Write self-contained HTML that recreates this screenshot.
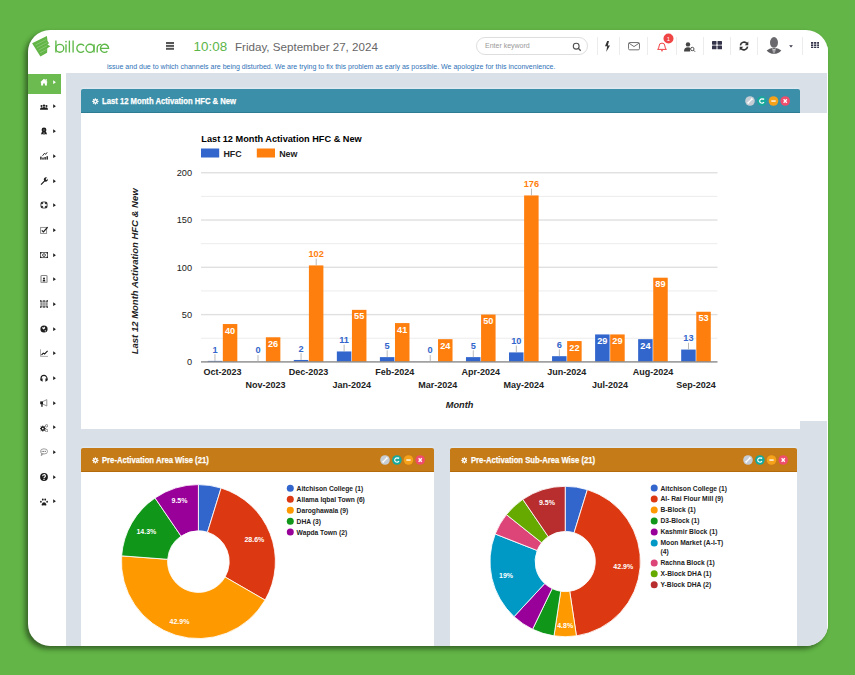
<!DOCTYPE html>
<html><head><meta charset="utf-8">
<style>
*{box-sizing:border-box;margin:0;padding:0}
html,body{width:855px;height:675px;overflow:hidden;background:#62b546;font-family:"Liberation Sans",sans-serif;position:relative}
.abs{position:absolute}
#card{position:absolute;left:28px;top:30px;width:800px;height:616px;background:#fff;border-radius:22px;box-shadow:-3px 3px 5px rgba(0,0,0,0.45);overflow:hidden}
#content{position:absolute;left:38px;top:43px;width:761px;height:573px;background:#d9e0e8}
.ph{position:absolute;height:24.2px;color:#fff;border-radius:2px 2px 0 0;box-shadow:0 -1.5px 0 #dfe7f0}
.pt{position:absolute;left:20.8px;top:6.9px;font-size:8.9px;font-weight:bold;white-space:nowrap;transform:scaleX(0.865);transform-origin:0 0;-webkit-text-stroke:0.25px #fff}
.gear{position:absolute;left:10.7px;top:9.1px}
.hdiv{position:absolute;top:37px;width:1px;height:18px;background:#ececec}
svg text{font-family:"Liberation Sans",sans-serif}
</style></head><body>
<div id="card">
  <div id="content"></div>
  <div class="abs" style="left:0;top:43.5px;width:32.8px;height:20.7px;background:#6cbb51"></div>
  <div class="abs" style="left:799px;top:0;width:1px;height:616px;background:#fff"></div>
</div>

<!-- logo -->
<svg class="abs" style="left:0;top:0" width="120" height="70" viewBox="0 0 120 70">
  <path d="M32.1 43.2 L46.9 35.9 L47.5 40.7 L49 43.3 L47.4 44.4 L50.4 46.3 L47.3 48.2 L47.1 52.7 L40.4 56.5Z" fill="#62b546"/>
  <path d="M35.5 45 L46 39.6 M37 47.6 L47.3 42.3 M38.5 50.2 L47 45.8 M40 52.8 L46.5 49.4" stroke="#a8d898" stroke-width="0.5"/>
  <g fill="none" stroke="#5eb848" stroke-width="1.35">
    <path d="M55.9 40.6 V52.5"/><circle cx="59.8" cy="48.3" r="3.95"/>
    <path d="M66 44.2 V52.5"/><path d="M69.4 40.6 V52.5"/><path d="M73.1 40.6 V52.5"/>
    <path d="M84 45.7 A4.05 4.05 0 1 0 84 50.9"/>
    <circle cx="90" cy="48.3" r="4.05"/><path d="M94.05 44.2 V52.5"/>
    <path d="M97.2 52.5 V48.3 Q97.2 44.3 101.2 44.3"/>
    <path d="M100.5 48.3 H108.6 A4.05 4.05 0 1 0 107.4 51.2"/>
  </g>
  <circle cx="66" cy="41.6" r="0.85" fill="#5eb848"/>
</svg>
<!-- hamburger -->
<div class="abs" style="left:166px;top:42.3px;width:8px;height:1.3px;background:#555;box-shadow:0 2.9px 0 #555,0 5.8px 0 #555"></div>
<div class="abs" style="left:193.6px;top:38.5px;font-size:13.4px;color:#5cb547;white-space:nowrap">10:08</div>
<div class="abs" style="left:235px;top:40px;font-size:11.6px;color:#666;white-space:nowrap">Friday, September 27, 2024</div>
<div class="abs" style="left:107px;top:62.9px;font-size:7.04px;color:#2f72b8;white-space:nowrap">issue and due to which channels are being disturbed. We are trying to fix this problem as early as possible. We apologize for this inconvenience.</div>

<!-- search -->
<div class="abs" style="left:476.4px;top:37.4px;width:111.3px;height:17.5px;border:1px solid #dedede;border-radius:9px"></div>
<div class="abs" style="left:485px;top:41.5px;font-size:7px;color:#999;white-space:nowrap">Enter keyword</div>
<svg class="abs" style="left:572px;top:41.5px" width="10" height="10" viewBox="0 0 10 10"><circle cx="4.2" cy="4.2" r="2.9" fill="none" stroke="#505050" stroke-width="1.1"/><path d="M6.3 6.3 L8.7 8.7" stroke="#505050" stroke-width="1.3"/></svg>

<div class="hdiv" style="left:596.5px"></div>
<div class="hdiv" style="left:619px"></div>
<div class="hdiv" style="left:647px"></div>
<div class="hdiv" style="left:675.5px"></div>
<div class="hdiv" style="left:703px"></div>
<div class="hdiv" style="left:730px"></div>
<div class="hdiv" style="left:757px"></div>
<div class="hdiv" style="left:801.5px"></div>

<!-- header icons -->
<svg class="abs" style="left:604px;top:40.5px" width="7" height="11" viewBox="0 0 7 11"><path d="M3.2 0 L1 5.2 L3.2 5.2 L2.2 11 L6 4.6 L3.8 4.6 L5 0Z" fill="#333"/></svg>
<svg class="abs" style="left:627.6px;top:42.2px" width="12" height="8.4" viewBox="0 0 12 8.4"><rect x="0.55" y="0.55" width="10.9" height="7.3" rx="1.2" fill="none" stroke="#707070" stroke-width="1"/><path d="M0.9 1.1 L6 4.6 L11.1 1.1" fill="none" stroke="#707070" stroke-width="1"/></svg>
<svg class="abs" style="left:655.5px;top:40.5px" width="12" height="11" viewBox="0 0 12 11"><path d="M1.6 8.4 Q3 7.4 3.1 5 A2.9 2.9 0 0 1 8.9 5 Q9 7.4 10.4 8.4Z" fill="none" stroke="#f0383b" stroke-width="0.95" stroke-linejoin="round"/><path d="M5 9.5 Q6 10.6 7 9.5" fill="none" stroke="#f0383b" stroke-width="0.95"/></svg>
<svg class="abs" style="left:663.3px;top:33.3px" width="11" height="11" viewBox="0 0 11 11"><circle cx="5.5" cy="5.5" r="5" fill="#f04545"/><text x="5.5" y="7.7" text-anchor="middle" font-size="6" fill="#fff">1</text></svg>
<svg class="abs" style="left:684px;top:41.5px" width="12" height="10" viewBox="0 0 12 10"><circle cx="4" cy="2.4" r="2.2" fill="#444"/><path d="M0 9.5 Q0 5.3 4 5.3 Q6 5.3 6.5 6.2 Q5.5 7.5 6.3 9.5Z" fill="#444"/><circle cx="8.3" cy="7" r="1.7" fill="none" stroke="#444" stroke-width="0.9"/><path d="M9.5 8.2 L11 9.7" stroke="#444" stroke-width="1"/></svg>
<svg class="abs" style="left:712px;top:41.3px" width="10" height="9" viewBox="0 0 10 9"><rect x="0" y="0" width="4.5" height="3.7" rx="0.6" fill="#34344a"/><rect x="5.5" y="0" width="4.5" height="3.7" rx="0.6" fill="#34344a"/><rect x="0" y="4.6" width="4.5" height="3.7" rx="0.6" fill="#34344a"/><rect x="5.5" y="4.6" width="4.5" height="3.7" rx="0.6" fill="#34344a"/></svg>
<svg class="abs" style="left:738.5px;top:40.8px" width="10" height="10" viewBox="0 0 10 10"><path d="M1.4 4.3 A3.7 3.7 0 0 1 8 2.6" fill="none" stroke="#333" stroke-width="1.6"/><path d="M8.6 5.7 A3.7 3.7 0 0 1 2 7.4" fill="none" stroke="#333" stroke-width="1.6"/><path d="M9.3 0.6 L9.3 4.2 L5.8 4.2Z" fill="#333"/><path d="M0.7 9.4 L0.7 5.8 L4.2 5.8Z" fill="#333"/></svg>
<svg class="abs" style="left:766px;top:36px" width="16" height="18" viewBox="0 0 16 18"><ellipse cx="8" cy="6.4" rx="4" ry="5.3" fill="#6a6a6e"/><path d="M0.7 14.4 Q3.5 12.2 6.3 11.9 L9.7 11.9 Q12.5 12.2 15.3 14.4 Q12.5 17.8 8 17.8 Q3.5 17.8 0.7 14.4Z" fill="#5f5f63"/><path d="M6.4 11.9 L8 13.6 L9.6 11.9 L9 16.6 L7 16.6Z" fill="#fff"/><path d="M7.5 13.4 L8.5 13.4 L8.6 16.6 L7.4 16.6Z" fill="#5f5f63"/></svg>
<svg class="abs" style="left:789px;top:44.5px" width="4" height="3" viewBox="0 0 4 3"><path d="M0.1 0.2 H3.9 L2 2.6Z" fill="#3a3a4c"/></svg>
<svg class="abs" style="left:810.6px;top:41.9px" width="8.4" height="6.6" viewBox="0 0 9 8" preserveAspectRatio="none"><g fill="#34344a">
<rect x="0" y="0" width="2.4" height="2.2"/><rect x="3.3" y="0" width="2.4" height="2.2"/><rect x="6.6" y="0" width="2.4" height="2.2"/>
<rect x="0" y="2.9" width="2.4" height="2.2"/><rect x="3.3" y="2.9" width="2.4" height="2.2"/><rect x="6.6" y="2.9" width="2.4" height="2.2"/>
<rect x="0" y="5.8" width="2.4" height="2.2"/><rect x="3.3" y="5.8" width="2.4" height="2.2"/><rect x="6.6" y="5.8" width="2.4" height="2.2"/></g></svg>

<!-- sidebar icons -->
<svg class="abs" style="left:39.6px;top:78px" width="8" height="8" viewBox="0 0 8 8" fill="#fff"><path d="M0.2 4.3 L4 0.8 L7.8 4.3 L6.9 4.3 L6.9 7.6 L4.9 7.6 L4.9 5.4 L3.1 5.4 L3.1 7.6 L1.1 7.6 L1.1 4.3Z"/><rect x="5.6" y="1" width="1.1" height="2"/></svg>
<svg class="abs" style="left:52.5px;top:79.8px" width="3" height="4.4" viewBox="0 0 3 4.4"><path d="M0.2 0.3 L2.9 2.2 L0.2 4.1Z" fill="#fff"/></svg>
<svg class="abs" style="left:39.6px;top:102.68px" width="8" height="8" viewBox="0 0 8 8" fill="#1e1e1e"><circle cx="1.5" cy="3" r="1"/><circle cx="6.5" cy="3" r="1"/><circle cx="4" cy="2.6" r="1.2"/><path d="M0 6.8 Q0 4.2 1.5 4.2 Q2.3 4.2 2.6 4.8 Q3 4 4 4 Q5 4 5.4 4.8 Q5.7 4.2 6.5 4.2 Q8 4.2 8 6.8Z"/></svg>
<svg class="abs" style="left:52.5px;top:104.48px" width="3" height="4.4" viewBox="0 0 3 4.4"><path d="M0.2 0.3 L2.9 2.2 L0.2 4.1Z" fill="#1e1e1e"/></svg>
<svg class="abs" style="left:39.6px;top:127.36px" width="8" height="8" viewBox="0 0 8 8" fill="#1e1e1e"><circle cx="4" cy="3" r="2.4"/><circle cx="4" cy="3" r="1" fill="#fff" opacity="0.25"/><path d="M2 4.6 L0.9 7.4 L2.4 7 L3.3 8 L4 5.5Z M6 4.6 L7.1 7.4 L5.6 7 L4.7 8 L4 5.5Z"/></svg>
<svg class="abs" style="left:52.5px;top:129.16px" width="3" height="4.4" viewBox="0 0 3 4.4"><path d="M0.2 0.3 L2.9 2.2 L0.2 4.1Z" fill="#1e1e1e"/></svg>
<svg class="abs" style="left:39.6px;top:152.04px" width="8" height="8" viewBox="0 0 8 8" fill="#1e1e1e"><rect x="0.2" y="4.6" width="1.4" height="3"/><rect x="2.3" y="5.6" width="1.4" height="2"/><rect x="4.4" y="5" width="1.4" height="2.6"/><rect x="6.5" y="4.2" width="1.4" height="3.4"/><path d="M2.5 3.8 L4.6 1.2 L5.6 2.4 L7.2 0.3" fill="none" stroke="#1e1e1e" stroke-width="0.9"/></svg>
<svg class="abs" style="left:52.5px;top:153.84px" width="3" height="4.4" viewBox="0 0 3 4.4"><path d="M0.2 0.3 L2.9 2.2 L0.2 4.1Z" fill="#1e1e1e"/></svg>
<svg class="abs" style="left:39.6px;top:176.72px" width="8" height="8" viewBox="0 0 8 8" fill="#1e1e1e"><path d="M0.6 7.2 L4.2 3.6 A2.1 2.1 0 0 1 7 0.6 L5.6 1.9 L6.1 2.8 L7.1 2.9 L7.8 1.6 A2.3 2.3 0 0 1 4.9 4.5 L1.4 8Z"/></svg>
<svg class="abs" style="left:52.5px;top:178.52px" width="3" height="4.4" viewBox="0 0 3 4.4"><path d="M0.2 0.3 L2.9 2.2 L0.2 4.1Z" fill="#1e1e1e"/></svg>
<svg class="abs" style="left:39.6px;top:201.4px" width="8" height="8" viewBox="0 0 8 8" fill="#1e1e1e"><circle cx="4" cy="4" r="3.2" fill="none" stroke="#777" stroke-width="1.3"/><path d="M1.3 1.3 L2.8 2.8 M6.7 1.3 L5.2 2.8 M1.3 6.7 L2.8 5.2 M6.7 6.7 L5.2 5.2" stroke="#1e1e1e" stroke-width="1.9"/><circle cx="4" cy="4" r="1.7" fill="#fff"/></svg>
<svg class="abs" style="left:52.5px;top:203.2px" width="3" height="4.4" viewBox="0 0 3 4.4"><path d="M0.2 0.3 L2.9 2.2 L0.2 4.1Z" fill="#1e1e1e"/></svg>
<svg class="abs" style="left:39.6px;top:226.08px" width="8" height="8" viewBox="0 0 8 8" fill="#1e1e1e"><rect x="0.6" y="1.4" width="6" height="6" fill="none" stroke="#888" stroke-width="0.9"/><path d="M1.8 4.4 L3.4 5.9 L7.6 1.2" fill="none" stroke="#1e1e1e" stroke-width="1.2"/></svg>
<svg class="abs" style="left:52.5px;top:227.88px" width="3" height="4.4" viewBox="0 0 3 4.4"><path d="M0.2 0.3 L2.9 2.2 L0.2 4.1Z" fill="#1e1e1e"/></svg>
<svg class="abs" style="left:39.6px;top:250.76px" width="8" height="8" viewBox="0 0 8 8" fill="#1e1e1e"><rect x="0.4" y="1.6" width="7.2" height="5" fill="none" stroke="#555" stroke-width="0.9"/><circle cx="4" cy="4.1" r="1.4" fill="none" stroke="#1e1e1e" stroke-width="0.8"/><rect x="0" y="1.2" width="1.4" height="1.4"/><rect x="6.6" y="1.2" width="1.4" height="1.4"/><rect x="0" y="5.6" width="1.4" height="1.4"/><rect x="6.6" y="5.6" width="1.4" height="1.4"/></svg>
<svg class="abs" style="left:52.5px;top:252.56px" width="3" height="4.4" viewBox="0 0 3 4.4"><path d="M0.2 0.3 L2.9 2.2 L0.2 4.1Z" fill="#1e1e1e"/></svg>
<svg class="abs" style="left:39.6px;top:275.44px" width="8" height="8" viewBox="0 0 8 8" fill="#1e1e1e"><rect x="1" y="0.4" width="6" height="7.4" rx="0.5" fill="none" stroke="#666" stroke-width="0.9"/><circle cx="4" cy="3.5" r="1"/><path d="M2.6 6.4 Q2.6 4.6 4 4.6 Q5.4 4.6 5.4 6.4Z"/></svg>
<svg class="abs" style="left:52.5px;top:277.24px" width="3" height="4.4" viewBox="0 0 3 4.4"><path d="M0.2 0.3 L2.9 2.2 L0.2 4.1Z" fill="#1e1e1e"/></svg>
<svg class="abs" style="left:39.6px;top:300.12px" width="8" height="8" viewBox="0 0 8 8" fill="#1e1e1e"><rect x="0.3" y="0.6" width="7.4" height="6.8" fill="#777"/><path d="M2.8 0 V8 M5.2 0 V8 M0 2.9 H8 M0 5.1 H8" stroke="#fff" stroke-width="0.5"/><rect x="0" y="0.3" width="1.3" height="1.2"/><rect x="3.35" y="0.3" width="1.3" height="1.2"/><rect x="6.7" y="0.3" width="1.3" height="1.2"/><rect x="0" y="6.5" width="1.3" height="1.2"/><rect x="3.35" y="6.5" width="1.3" height="1.2"/><rect x="6.7" y="6.5" width="1.3" height="1.2"/></svg>
<svg class="abs" style="left:52.5px;top:301.92px" width="3" height="4.4" viewBox="0 0 3 4.4"><path d="M0.2 0.3 L2.9 2.2 L0.2 4.1Z" fill="#1e1e1e"/></svg>
<svg class="abs" style="left:39.6px;top:324.8px" width="8" height="8" viewBox="0 0 8 8" fill="#1e1e1e"><circle cx="4" cy="4" r="3.6"/><path d="M2 2.2 L3.8 2.4 L4.3 1.4 L5.3 3 L3.8 4.6 L2.6 3.8Z M4.6 5.5 L5.8 4.8 L5.3 7" fill="#fff"/></svg>
<svg class="abs" style="left:52.5px;top:326.6px" width="3" height="4.4" viewBox="0 0 3 4.4"><path d="M0.2 0.3 L2.9 2.2 L0.2 4.1Z" fill="#1e1e1e"/></svg>
<svg class="abs" style="left:39.6px;top:349.48px" width="8" height="8" viewBox="0 0 8 8" fill="#1e1e1e"><path d="M0.5 0.3 V7.4 H8" fill="none" stroke="#999" stroke-width="0.8"/><path d="M1.5 6 L3.3 4.1 L4.6 5 L7.6 1.8" fill="none" stroke="#1e1e1e" stroke-width="1.1"/></svg>
<svg class="abs" style="left:52.5px;top:351.28px" width="3" height="4.4" viewBox="0 0 3 4.4"><path d="M0.2 0.3 L2.9 2.2 L0.2 4.1Z" fill="#1e1e1e"/></svg>
<svg class="abs" style="left:39.6px;top:374.16px" width="8" height="8" viewBox="0 0 8 8" fill="#1e1e1e"><path d="M1 6.2 V4.4 A3 3 0 0 1 7 4.4 V6.2" fill="none" stroke="#1e1e1e" stroke-width="1.1"/><path d="M0.6 4.6 H2.6 V7.8 L0.6 6.6Z M7.4 4.6 H5.4 V7.8 L7.4 6.6Z"/></svg>
<svg class="abs" style="left:52.5px;top:375.96px" width="3" height="4.4" viewBox="0 0 3 4.4"><path d="M0.2 0.3 L2.9 2.2 L0.2 4.1Z" fill="#1e1e1e"/></svg>
<svg class="abs" style="left:39.6px;top:398.84px" width="8" height="8" viewBox="0 0 8 8" fill="#1e1e1e"><path d="M2.8 2.6 L6.8 0.6 V7 L2.8 5" fill="none" stroke="#777" stroke-width="0.8"/><rect x="0.2" y="2.4" width="2.8" height="2.8"/><rect x="1.3" y="5" width="1.3" height="2.8"/></svg>
<svg class="abs" style="left:52.5px;top:400.64px" width="3" height="4.4" viewBox="0 0 3 4.4"><path d="M0.2 0.3 L2.9 2.2 L0.2 4.1Z" fill="#1e1e1e"/></svg>
<svg class="abs" style="left:39.6px;top:423.52px" width="8" height="8" viewBox="0 0 8 8" fill="#1e1e1e"><circle cx="2.8" cy="4.6" r="2.3"/><path d="M2.8 1.6 V7.6 M-0.2 4.6 H5.8 M0.7 2.5 L4.9 6.7 M0.7 6.7 L4.9 2.5" stroke="#1e1e1e" stroke-width="0.9"/><circle cx="2.8" cy="4.6" r="0.9" fill="#fff"/><circle cx="6.6" cy="1.8" r="1.2" fill="none" stroke="#666" stroke-width="0.8"/><circle cx="6.6" cy="6.6" r="1.2" fill="none" stroke="#666" stroke-width="0.8"/></svg>
<svg class="abs" style="left:52.5px;top:425.32px" width="3" height="4.4" viewBox="0 0 3 4.4"><path d="M0.2 0.3 L2.9 2.2 L0.2 4.1Z" fill="#1e1e1e"/></svg>
<svg class="abs" style="left:39.6px;top:448.2px" width="8" height="8" viewBox="0 0 8 8" fill="#1e1e1e"><ellipse cx="4" cy="3.4" rx="3.6" ry="2.6" fill="none" stroke="#777" stroke-width="0.7"/><path d="M1.8 5.4 L1.2 7.6 L3.4 6" fill="none" stroke="#777" stroke-width="0.7"/><path d="M1.6 3.4 H6.4" stroke="#444" stroke-width="0.9" stroke-dasharray="1 0.6"/></svg>
<svg class="abs" style="left:52.5px;top:450px" width="3" height="4.4" viewBox="0 0 3 4.4"><path d="M0.2 0.3 L2.9 2.2 L0.2 4.1Z" fill="#1e1e1e"/></svg>
<svg class="abs" style="left:39.6px;top:472.88px" width="8" height="8" viewBox="0 0 8 8" fill="#1e1e1e"><circle cx="4" cy="4" r="3.9"/><path d="M2.7 3.1 A1.35 1.35 0 1 1 4.5 4.3 Q4 4.6 4 5.2" fill="none" stroke="#fff" stroke-width="1.1"/><circle cx="4" cy="6.4" r="0.65" fill="#fff"/></svg>
<svg class="abs" style="left:52.5px;top:474.68px" width="3" height="4.4" viewBox="0 0 3 4.4"><path d="M0.2 0.3 L2.9 2.2 L0.2 4.1Z" fill="#1e1e1e"/></svg>
<svg class="abs" style="left:39.6px;top:497.56px" width="8" height="8" viewBox="0 0 8 8" fill="#1e1e1e"><path d="M4 4.2 Q5.6 4.2 6.4 6.4 Q6.6 7.8 5.2 7.4 Q4 7 2.8 7.4 Q1.4 7.8 1.6 6.4 Q2.4 4.2 4 4.2Z"/><ellipse cx="0.9" cy="3.7" rx="0.85" ry="1.05"/><ellipse cx="7.1" cy="3.7" rx="0.85" ry="1.05"/><ellipse cx="2.8" cy="1.6" rx="0.9" ry="1.15"/><ellipse cx="5.2" cy="1.6" rx="0.9" ry="1.15"/></svg>
<svg class="abs" style="left:52.5px;top:499.36px" width="3" height="4.4" viewBox="0 0 3 4.4"><path d="M0.2 0.3 L2.9 2.2 L0.2 4.1Z" fill="#1e1e1e"/></svg>

<!-- panel 1 -->
<div class="ph" style="left:81.2px;top:89px;width:718.8px;background:#3b8fa8;border-bottom:1.5px solid #2d7c94">
<svg class="gear" width="6.8" height="6.8" viewBox="0 0 16 16"><g fill="#fff"><circle cx="8" cy="8" r="5"/><rect x="6.5" y="0.5" width="3" height="15" rx="0.8"/><rect x="6.5" y="0.5" width="3" height="15" rx="0.8" transform="rotate(45 8 8)"/><rect x="6.5" y="0.5" width="3" height="15" rx="0.8" transform="rotate(90 8 8)"/><rect x="6.5" y="0.5" width="3" height="15" rx="0.8" transform="rotate(135 8 8)"/></g><circle cx="8" cy="8" r="2" fill="#3b8fa8"/></svg>
<div class="pt">Last 12 Month Activation HFC &amp; New</div>
</div>
<svg class="abs" style="left:744.3px;top:94.8px" width="48" height="12" viewBox="0 0 48 12">
<circle cx="6" cy="6" r="4.8" fill="#c7cdd4"/><path d="M4 8 L8 4" stroke="#fff" stroke-width="1.3"/><circle cx="4.2" cy="7.8" r="0.9" fill="#fff"/><circle cx="7.8" cy="4.2" r="0.9" fill="#fff"/>
<circle cx="17.9" cy="6" r="4.8" fill="#16a99c"/><path d="M19.6 4.6 A2.2 2.2 0 1 0 19.9 7" stroke="#fff" stroke-width="1.2" fill="none"/><path d="M18.6 3.4 L20.3 3.6 L20 5.2Z" fill="#fff"/>
<circle cx="29.5" cy="6" r="4.8" fill="#f5a11a"/><rect x="27.3" y="5.4" width="4.4" height="1.3" fill="#fff"/>
<circle cx="41.2" cy="6" r="4.8" fill="#ef4d6b"/><path d="M39.6 4.3 L42.8 7.7 M42.8 4.3 L39.6 7.7" stroke="#fff" stroke-width="1.3"/>
</svg>
<div class="abs" style="left:81.2px;top:113.2px;width:718.8px;height:316.3px;background:#fff"></div>
<div class="abs" style="left:799px;top:113.2px;width:28px;height:307.6px;background:#fff"></div>

<!-- panel 2 -->
<div class="ph" style="left:81.2px;top:448px;width:352.8px;background:#c47b18;border-bottom:1.5px solid #b36b0c">
<svg class="gear" width="6.8" height="6.8" viewBox="0 0 16 16"><g fill="#fff"><circle cx="8" cy="8" r="5"/><rect x="6.5" y="0.5" width="3" height="15" rx="0.8"/><rect x="6.5" y="0.5" width="3" height="15" rx="0.8" transform="rotate(45 8 8)"/><rect x="6.5" y="0.5" width="3" height="15" rx="0.8" transform="rotate(90 8 8)"/><rect x="6.5" y="0.5" width="3" height="15" rx="0.8" transform="rotate(135 8 8)"/></g><circle cx="8" cy="8" r="2" fill="#c47b18"/></svg>
<div class="pt">Pre-Activation Area Wise (21)</div>
</div>
<svg class="abs" style="left:378.9px;top:453.7px" width="48" height="12" viewBox="0 0 48 12">
<circle cx="6" cy="6" r="4.8" fill="#c7cdd4"/><path d="M4 8 L8 4" stroke="#fff" stroke-width="1.3"/><circle cx="4.2" cy="7.8" r="0.9" fill="#fff"/><circle cx="7.8" cy="4.2" r="0.9" fill="#fff"/>
<circle cx="17.9" cy="6" r="4.8" fill="#16a99c"/><path d="M19.6 4.6 A2.2 2.2 0 1 0 19.9 7" stroke="#fff" stroke-width="1.2" fill="none"/><path d="M18.6 3.4 L20.3 3.6 L20 5.2Z" fill="#fff"/>
<circle cx="29.5" cy="6" r="4.8" fill="#f5a11a"/><rect x="27.3" y="5.4" width="4.4" height="1.3" fill="#fff"/>
<circle cx="41.2" cy="6" r="4.8" fill="#ef4d6b"/><path d="M39.6 4.3 L42.8 7.7 M42.8 4.3 L39.6 7.7" stroke="#fff" stroke-width="1.3"/>
</svg>
<div class="abs" style="left:81.2px;top:472px;width:352.8px;height:174px;background:#fff"></div>

<!-- panel 3 -->
<div class="ph" style="left:450px;top:448px;width:346.8px;background:#c47b18;border-bottom:1.5px solid #b36b0c">
<svg class="gear" width="6.8" height="6.8" viewBox="0 0 16 16"><g fill="#fff"><circle cx="8" cy="8" r="5"/><rect x="6.5" y="0.5" width="3" height="15" rx="0.8"/><rect x="6.5" y="0.5" width="3" height="15" rx="0.8" transform="rotate(45 8 8)"/><rect x="6.5" y="0.5" width="3" height="15" rx="0.8" transform="rotate(90 8 8)"/><rect x="6.5" y="0.5" width="3" height="15" rx="0.8" transform="rotate(135 8 8)"/></g><circle cx="8" cy="8" r="2" fill="#c47b18"/></svg>
<div class="pt">Pre-Activation Sub-Area Wise (21)</div>
</div>
<svg class="abs" style="left:741.5px;top:453.7px" width="48" height="12" viewBox="0 0 48 12">
<circle cx="6" cy="6" r="4.8" fill="#c7cdd4"/><path d="M4 8 L8 4" stroke="#fff" stroke-width="1.3"/><circle cx="4.2" cy="7.8" r="0.9" fill="#fff"/><circle cx="7.8" cy="4.2" r="0.9" fill="#fff"/>
<circle cx="17.9" cy="6" r="4.8" fill="#16a99c"/><path d="M19.6 4.6 A2.2 2.2 0 1 0 19.9 7" stroke="#fff" stroke-width="1.2" fill="none"/><path d="M18.6 3.4 L20.3 3.6 L20 5.2Z" fill="#fff"/>
<circle cx="29.5" cy="6" r="4.8" fill="#f5a11a"/><rect x="27.3" y="5.4" width="4.4" height="1.3" fill="#fff"/>
<circle cx="41.2" cy="6" r="4.8" fill="#ef4d6b"/><path d="M39.6 4.3 L42.8 7.7 M42.8 4.3 L39.6 7.7" stroke="#fff" stroke-width="1.3"/>
</svg>
<div class="abs" style="left:450px;top:472px;width:346.8px;height:174px;background:#fff"></div>

<svg class="abs" style="left:0;top:0" width="855" height="675" viewBox="0 0 855 675">
<rect x="201" y="337.71" width="516.5" height="1" fill="#ececec"/>
<rect x="201" y="290.44" width="516.5" height="1" fill="#ececec"/>
<rect x="201" y="243.16" width="516.5" height="1" fill="#ececec"/>
<rect x="201" y="195.89" width="516.5" height="1" fill="#ececec"/>
<rect x="201" y="313.88" width="516.5" height="1.4" fill="#e0e0e0"/>
<rect x="201" y="266.6" width="516.5" height="1.4" fill="#e0e0e0"/>
<rect x="201" y="219.33" width="516.5" height="1.4" fill="#e0e0e0"/>
<rect x="201" y="172.05" width="516.5" height="1.4" fill="#e0e0e0"/>
<text x="192" y="365.25" text-anchor="end" font-size="9.2" fill="#222">0</text>
<text x="192" y="317.98" text-anchor="end" font-size="9.2" fill="#222">50</text>
<text x="192" y="270.7" text-anchor="end" font-size="9.2" fill="#222">100</text>
<text x="192" y="223.43" text-anchor="end" font-size="9.2" fill="#222">150</text>
<text x="192" y="176.15" text-anchor="end" font-size="9.2" fill="#222">200</text>
<rect x="207.72" y="360.9" width="14.5" height="0.95" fill="#3366cc"/>
<rect x="222.82" y="324.03" width="14.5" height="37.82" fill="#ff7f0e"/>
<rect x="265.86" y="337.27" width="14.5" height="24.58" fill="#ff7f0e"/>
<rect x="293.8" y="359.96" width="14.5" height="1.89" fill="#3366cc"/>
<rect x="308.9" y="265.41" width="14.5" height="96.44" fill="#ff7f0e"/>
<rect x="336.85" y="351.45" width="14.5" height="10.4" fill="#3366cc"/>
<rect x="351.95" y="309.85" width="14.5" height="52" fill="#ff7f0e"/>
<rect x="379.89" y="357.12" width="14.5" height="4.73" fill="#3366cc"/>
<rect x="394.99" y="323.08" width="14.5" height="38.77" fill="#ff7f0e"/>
<rect x="438.03" y="339.16" width="14.5" height="22.69" fill="#ff7f0e"/>
<rect x="465.97" y="357.12" width="14.5" height="4.73" fill="#3366cc"/>
<rect x="481.07" y="314.58" width="14.5" height="47.27" fill="#ff7f0e"/>
<rect x="509.01" y="352.4" width="14.5" height="9.45" fill="#3366cc"/>
<rect x="524.11" y="195.44" width="14.5" height="166.41" fill="#ff7f0e"/>
<rect x="552.05" y="356.18" width="14.5" height="5.67" fill="#3366cc"/>
<rect x="567.15" y="341.05" width="14.5" height="20.8" fill="#ff7f0e"/>
<rect x="595.1" y="334.43" width="14.5" height="27.42" fill="#3366cc"/>
<rect x="610.2" y="334.43" width="14.5" height="27.42" fill="#ff7f0e"/>
<rect x="638.14" y="339.16" width="14.5" height="22.69" fill="#3366cc"/>
<rect x="653.24" y="277.7" width="14.5" height="84.15" fill="#ff7f0e"/>
<rect x="681.18" y="349.56" width="14.5" height="12.29" fill="#3366cc"/>
<rect x="696.28" y="311.74" width="14.5" height="50.11" fill="#ff7f0e"/>
<rect x="201" y="361" width="516.5" height="1.75" fill="#8a8a8a" opacity="0.8"/>
<rect x="214.57" y="354.1" width="0.8" height="6.8" fill="#a8a8a8"/>
<text x="214.97" y="352.5" text-anchor="middle" font-size="9.2" font-weight="bold" fill="#3366cc">1</text>
<text x="230.07" y="333.53" text-anchor="middle" font-size="9.2" font-weight="bold" fill="#fff">40</text>
<text x="222.52" y="375.4" text-anchor="middle" font-size="9" font-weight="bold" fill="#222">Oct-2023</text>
<rect x="257.61" y="355.05" width="0.8" height="6.8" fill="#a8a8a8"/>
<text x="258.01" y="353.45" text-anchor="middle" font-size="9.2" font-weight="bold" fill="#3366cc">0</text>
<text x="273.11" y="346.77" text-anchor="middle" font-size="9.2" font-weight="bold" fill="#fff">26</text>
<text x="265.56" y="387.6" text-anchor="middle" font-size="9" font-weight="bold" fill="#222">Nov-2023</text>
<rect x="300.65" y="353.16" width="0.8" height="6.8" fill="#a8a8a8"/>
<text x="301.05" y="351.56" text-anchor="middle" font-size="9.2" font-weight="bold" fill="#3366cc">2</text>
<rect x="315.75" y="258.61" width="0.8" height="6.8" fill="#a8a8a8"/>
<text x="316.15" y="257.01" text-anchor="middle" font-size="9.2" font-weight="bold" fill="#ff7f0e">102</text>
<text x="308.6" y="375.4" text-anchor="middle" font-size="9" font-weight="bold" fill="#222">Dec-2023</text>
<rect x="343.7" y="344.65" width="0.8" height="6.8" fill="#a8a8a8"/>
<text x="344.1" y="343.05" text-anchor="middle" font-size="9.2" font-weight="bold" fill="#3366cc">11</text>
<text x="359.2" y="319.35" text-anchor="middle" font-size="9.2" font-weight="bold" fill="#fff">55</text>
<text x="351.65" y="387.6" text-anchor="middle" font-size="9" font-weight="bold" fill="#222">Jan-2024</text>
<rect x="386.74" y="350.32" width="0.8" height="6.8" fill="#a8a8a8"/>
<text x="387.14" y="348.72" text-anchor="middle" font-size="9.2" font-weight="bold" fill="#3366cc">5</text>
<text x="402.24" y="332.58" text-anchor="middle" font-size="9.2" font-weight="bold" fill="#fff">41</text>
<text x="394.69" y="375.4" text-anchor="middle" font-size="9" font-weight="bold" fill="#222">Feb-2024</text>
<rect x="429.78" y="355.05" width="0.8" height="6.8" fill="#a8a8a8"/>
<text x="430.18" y="353.45" text-anchor="middle" font-size="9.2" font-weight="bold" fill="#3366cc">0</text>
<text x="445.28" y="348.66" text-anchor="middle" font-size="9.2" font-weight="bold" fill="#fff">24</text>
<text x="437.73" y="387.6" text-anchor="middle" font-size="9" font-weight="bold" fill="#222">Mar-2024</text>
<rect x="472.82" y="350.32" width="0.8" height="6.8" fill="#a8a8a8"/>
<text x="473.22" y="348.72" text-anchor="middle" font-size="9.2" font-weight="bold" fill="#3366cc">5</text>
<text x="488.32" y="324.08" text-anchor="middle" font-size="9.2" font-weight="bold" fill="#fff">50</text>
<text x="480.77" y="375.4" text-anchor="middle" font-size="9" font-weight="bold" fill="#222">Apr-2024</text>
<rect x="515.86" y="345.6" width="0.8" height="6.8" fill="#a8a8a8"/>
<text x="516.26" y="344" text-anchor="middle" font-size="9.2" font-weight="bold" fill="#3366cc">10</text>
<rect x="530.96" y="188.64" width="0.8" height="6.8" fill="#a8a8a8"/>
<text x="531.36" y="187.04" text-anchor="middle" font-size="9.2" font-weight="bold" fill="#ff7f0e">176</text>
<text x="523.81" y="387.6" text-anchor="middle" font-size="9" font-weight="bold" fill="#222">May-2024</text>
<rect x="558.9" y="349.38" width="0.8" height="6.8" fill="#a8a8a8"/>
<text x="559.3" y="347.78" text-anchor="middle" font-size="9.2" font-weight="bold" fill="#3366cc">6</text>
<text x="574.4" y="350.55" text-anchor="middle" font-size="9.2" font-weight="bold" fill="#fff">22</text>
<text x="566.85" y="375.4" text-anchor="middle" font-size="9" font-weight="bold" fill="#222">Jun-2024</text>
<text x="602.35" y="343.93" text-anchor="middle" font-size="9.2" font-weight="bold" fill="#fff">29</text>
<text x="617.45" y="343.93" text-anchor="middle" font-size="9.2" font-weight="bold" fill="#fff">29</text>
<text x="609.9" y="387.6" text-anchor="middle" font-size="9" font-weight="bold" fill="#222">Jul-2024</text>
<text x="645.39" y="348.66" text-anchor="middle" font-size="9.2" font-weight="bold" fill="#fff">24</text>
<text x="660.49" y="287.2" text-anchor="middle" font-size="9.2" font-weight="bold" fill="#fff">89</text>
<text x="652.94" y="375.4" text-anchor="middle" font-size="9" font-weight="bold" fill="#222">Aug-2024</text>
<rect x="688.03" y="342.76" width="0.8" height="6.8" fill="#a8a8a8"/>
<text x="688.43" y="341.16" text-anchor="middle" font-size="9.2" font-weight="bold" fill="#3366cc">13</text>
<text x="703.53" y="321.24" text-anchor="middle" font-size="9.2" font-weight="bold" fill="#fff">53</text>
<text x="695.98" y="387.6" text-anchor="middle" font-size="9" font-weight="bold" fill="#222">Sep-2024</text>
<text x="201.3" y="141.8" font-size="9.2" font-weight="bold" fill="#000">Last 12 Month Activation HFC &amp; New</text>
<rect x="201" y="148.5" width="18.2" height="9" fill="#3366cc"/>
<text x="223.4" y="156.9" font-size="8.9" font-weight="bold" fill="#222">HFC</text>
<rect x="256.8" y="148.5" width="18.2" height="9" fill="#ff7f0e"/>
<text x="279.2" y="156.9" font-size="8.9" font-weight="bold" fill="#222">New</text>
<text x="459.6" y="408.3" text-anchor="middle" font-size="9.2" font-weight="bold" font-style="italic" fill="#222">Month</text>
<text transform="translate(137.7,271.3) rotate(-90)" text-anchor="middle" font-size="9.5" font-weight="bold" font-style="italic" fill="#222">Last 12 Month Activation HFC &amp; New</text>
<path d="M198.4 484.6A77 77 0 0 1 221.1 488.02L207.48 532.17A30.8 30.8 0 0 0 198.4 530.8Z" fill="#3366cc" stroke="#fff" stroke-width="0.85"/>
<path d="M221.1 488.02A77 77 0 0 1 265.08 600.1L225.07 577A30.8 30.8 0 0 0 207.48 532.17Z" fill="#dc3912" stroke="#fff" stroke-width="0.85"/>
<path d="M265.08 600.1A77 77 0 0 1 121.62 555.85L167.69 559.3A30.8 30.8 0 0 0 225.07 577Z" fill="#ff9900" stroke="#fff" stroke-width="0.85"/>
<path d="M121.62 555.85A77 77 0 0 1 155.02 497.98L181.05 536.15A30.8 30.8 0 0 0 167.69 559.3Z" fill="#109618" stroke="#fff" stroke-width="0.85"/>
<path d="M155.02 497.98A77 77 0 0 1 198.4 484.6L198.4 530.8A30.8 30.8 0 0 0 181.05 536.15Z" fill="#990099" stroke="#fff" stroke-width="0.85"/>
<text x="254.4" y="542.4" text-anchor="middle" font-size="7" font-weight="bold" fill="#fff">28.6%</text>
<text x="179.5" y="624.3" text-anchor="middle" font-size="7" font-weight="bold" fill="#fff">42.9%</text>
<text x="146.4" y="534.3" text-anchor="middle" font-size="7" font-weight="bold" fill="#fff">14.3%</text>
<text x="179.5" y="502.5" text-anchor="middle" font-size="7" font-weight="bold" fill="#fff">9.5%</text>
<circle cx="290.3" cy="488.3" r="3.5" fill="#3366cc"/>
<text x="296.6" y="490.8" font-size="6.7" font-weight="bold" fill="#222">Aitchison College (1)</text>
<circle cx="290.3" cy="499.25" r="3.5" fill="#dc3912"/>
<text x="296.6" y="501.75" font-size="6.7" font-weight="bold" fill="#222">Allama Iqbal Town (6)</text>
<circle cx="290.3" cy="510.2" r="3.5" fill="#ff9900"/>
<text x="296.6" y="512.7" font-size="6.7" font-weight="bold" fill="#222">Daroghawala (9)</text>
<circle cx="290.3" cy="521.15" r="3.5" fill="#109618"/>
<text x="296.6" y="523.65" font-size="6.7" font-weight="bold" fill="#222">DHA (3)</text>
<circle cx="290.3" cy="532.1" r="3.5" fill="#990099"/>
<text x="296.6" y="534.6" font-size="6.7" font-weight="bold" fill="#222">Wapda Town (2)</text>
<path d="M565.2 486.3A75.2 75.2 0 0 1 587.37 489.64L574.07 532.74A30.1 30.1 0 0 0 565.2 531.4Z" fill="#3366cc" stroke="#fff" stroke-width="0.85"/>
<path d="M587.37 489.64A75.2 75.2 0 0 1 576.41 635.86L569.69 591.26A30.1 30.1 0 0 0 574.07 532.74Z" fill="#dc3912" stroke="#fff" stroke-width="0.85"/>
<path d="M576.41 635.86A75.2 75.2 0 0 1 553.99 635.86L560.71 591.26A30.1 30.1 0 0 0 569.69 591.26Z" fill="#ff9900" stroke="#fff" stroke-width="0.85"/>
<path d="M553.99 635.86A75.2 75.2 0 0 1 532.57 629.25L552.14 588.62A30.1 30.1 0 0 0 560.71 591.26Z" fill="#109618" stroke="#fff" stroke-width="0.85"/>
<path d="M532.57 629.25A75.2 75.2 0 0 1 514.05 616.63L544.73 583.56A30.1 30.1 0 0 0 552.14 588.62Z" fill="#990099" stroke="#fff" stroke-width="0.85"/>
<path d="M514.05 616.63A75.2 75.2 0 0 1 495.2 534.03L537.18 550.5A30.1 30.1 0 0 0 544.73 583.56Z" fill="#0099c6" stroke="#fff" stroke-width="0.85"/>
<path d="M495.2 534.03A75.2 75.2 0 0 1 506.41 514.61L541.67 542.73A30.1 30.1 0 0 0 537.18 550.5Z" fill="#dd4477" stroke="#fff" stroke-width="0.85"/>
<path d="M506.41 514.61A75.2 75.2 0 0 1 522.84 499.37L548.24 536.63A30.1 30.1 0 0 0 541.67 542.73Z" fill="#66aa00" stroke="#fff" stroke-width="0.85"/>
<path d="M522.84 499.37A75.2 75.2 0 0 1 565.2 486.3L565.2 531.4A30.1 30.1 0 0 0 548.24 536.63Z" fill="#b82e2e" stroke="#fff" stroke-width="0.85"/>
<text x="623.3" y="568.5" text-anchor="middle" font-size="7" font-weight="bold" fill="#fff">42.9%</text>
<text x="506" y="577.6" text-anchor="middle" font-size="7" font-weight="bold" fill="#fff">19%</text>
<text x="565.2" y="628.2" text-anchor="middle" font-size="7" font-weight="bold" fill="#fff">4.8%</text>
<text x="546.9" y="504.6" text-anchor="middle" font-size="7" font-weight="bold" fill="#fff">9.5%</text>
<circle cx="654.2" cy="488" r="3.5" fill="#3366cc"/>
<text x="660.5" y="490.5" font-size="6.7" font-weight="bold" fill="#222">Aitchison College (1)</text>
<circle cx="654.2" cy="498.98" r="3.5" fill="#dc3912"/>
<text x="660.5" y="501.48" font-size="6.7" font-weight="bold" fill="#222">Al- Rai Flour Mill (9)</text>
<circle cx="654.2" cy="509.96" r="3.5" fill="#ff9900"/>
<text x="660.5" y="512.46" font-size="6.7" font-weight="bold" fill="#222">B-Block (1)</text>
<circle cx="654.2" cy="520.94" r="3.5" fill="#109618"/>
<text x="660.5" y="523.44" font-size="6.7" font-weight="bold" fill="#222">D3-Block (1)</text>
<circle cx="654.2" cy="531.92" r="3.5" fill="#990099"/>
<text x="660.5" y="534.42" font-size="6.7" font-weight="bold" fill="#222">Kashmir Block (1)</text>
<circle cx="654.2" cy="542.9" r="3.5" fill="#0099c6"/>
<text x="660.5" y="545.4" font-size="6.7" font-weight="bold" fill="#222">Moon Market (A-I-T)</text>
<text x="660.5" y="554.4" font-size="6.7" font-weight="bold" fill="#222">(4)</text>
<circle cx="654.2" cy="562.88" r="3.5" fill="#dd4477"/>
<text x="660.5" y="565.38" font-size="6.7" font-weight="bold" fill="#222">Rachna Block (1)</text>
<circle cx="654.2" cy="573.86" r="3.5" fill="#66aa00"/>
<text x="660.5" y="576.36" font-size="6.7" font-weight="bold" fill="#222">X-Block DHA (1)</text>
<circle cx="654.2" cy="584.84" r="3.5" fill="#b82e2e"/>
<text x="660.5" y="587.34" font-size="6.7" font-weight="bold" fill="#222">Y-Block DHA (2)</text>
</svg>
</body></html>
